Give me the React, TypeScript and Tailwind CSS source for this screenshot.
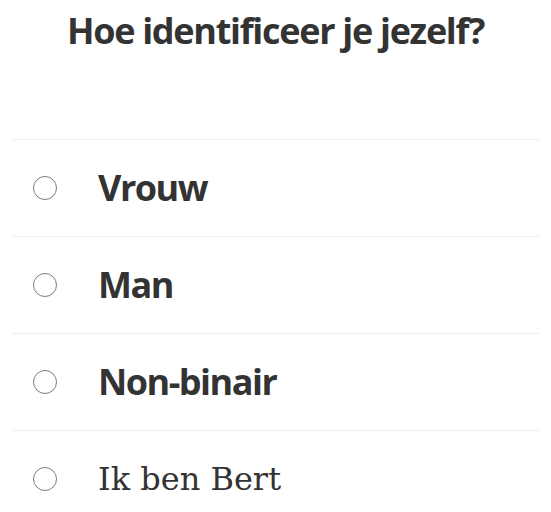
import React from 'react';

const options = [
  { label: 'Vrouw', serif: false },
  { label: 'Man', serif: false },
  { label: 'Non-binair', serif: false },
  { label: 'Ik ben Bert', serif: true },
];

export default function App() {
  return (
    <div className="min-h-screen bg-white px-3 text-[#333333] font-['Open_Sans',sans-serif]">
      <h1 className="pt-[8px] text-center text-[36px] font-bold leading-[46px] tracking-[-1.3px]">
        Hoe identificeer je jezelf?
      </h1>
      <ul className="mt-[85px]">
        {options.map((o) => (
          <li key={o.label} className="flex h-[97px] items-center border-t border-[#eeeeee]">
            <span className="ml-[21px] h-[24px] w-[24px] shrink-0 rounded-full border border-[#7a7a7a] bg-white" />
            <span
              className={
                o.serif
                  ? "ml-[41px] font-['DejaVu_Serif',serif] text-[32px] font-normal leading-[40px]"
                  : 'ml-[41px] text-[36px] font-bold leading-[40px] tracking-[-1.5px]'
              }
            >
              {o.label}
            </span>
          </li>
        ))}
      </ul>
    </div>
  );
}
